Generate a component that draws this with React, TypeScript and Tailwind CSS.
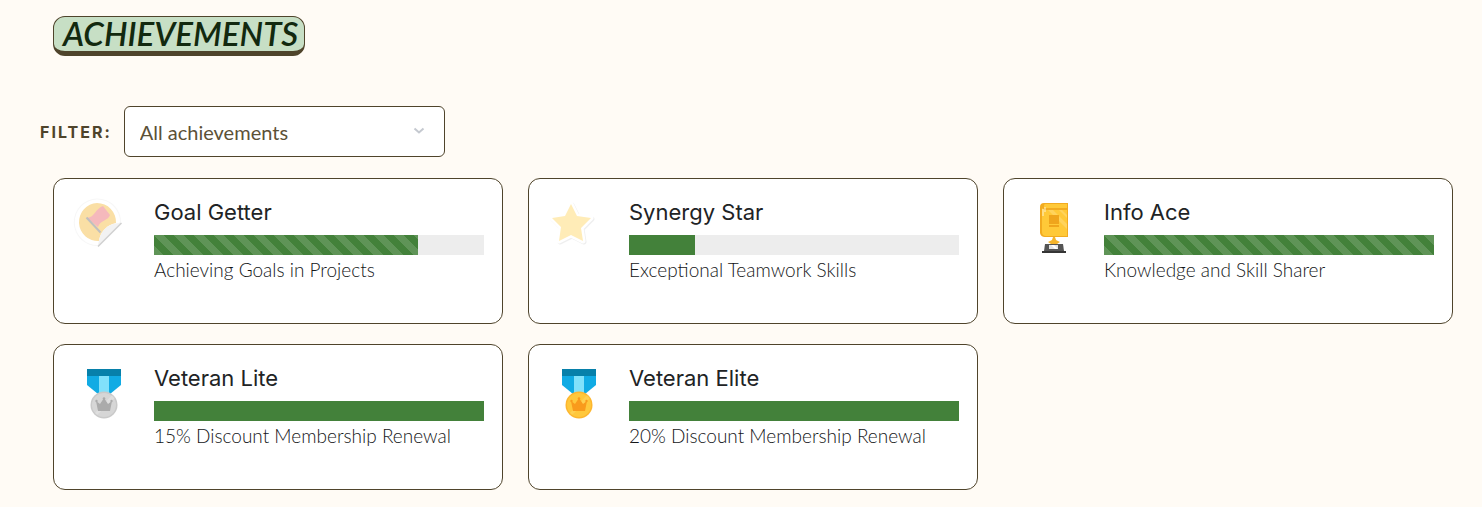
import type { ReactNode } from 'react';

type Achievement = {
  title: string;
  description: string;
  progress: number;
  striped: boolean;
  icon: ReactNode;
};

function GoalIcon() {
  return (
    <svg viewBox="0 0 60 60" className="size-[60px]" aria-hidden="true">
      <path d="M27 3.500a23.500 23.500 0 1 0 1 47.500L51 28A23.500 23.500 0 0 0 27 3.500Z" fill="#f7f7f7" />
      <path d="M27 4.500a22.500 22.500 0 1 0 1 45.500L50 27A22.500 22.500 0 0 0 27 4.500Z" fill="#fff" />
      <path d="M27 8a19 19 0 1 0 2 38c1-8 7-16 17-18A19 19 0 0 0 27 8Z" fill="#fadfa5" />
      <path d="M17 23c8-1 8-9 16-12l7 9c-2 6-10 5-12 12Z" fill="#f5b9bc" />
      <path d="m16.500 22.500 14 15" stroke="#bfbfbf" strokeWidth="2" />
      <path d="M28 51c1-7 2-11 5-15 4-5 9-8 18-8Z" fill="#f2f2f2" />
      <path d="m28 51.500 23.500-23.500" stroke="#cfcfcf" strokeWidth="1.500" />
    </svg>
  );
}

function StarIcon() {
  return (
    <svg viewBox="0 0 60 60" className="size-[60px]" aria-hidden="true">
      <path d="m27 10 6 12 14 2-10 10 2 13-12-6-12 6 2-14L8 24l13-2Z" fill="#d8d8d8" stroke="#d8d8d8" strokeWidth="5" strokeLinejoin="round" opacity=".4" />
      <path d="m26 9 6 12 14 2-10 10 2 13-12-6-12 6 2-14L7 23l13-2Z" fill="#fff" stroke="#fff" strokeWidth="5" strokeLinejoin="round" />
      <path d="m26 9 6 12 14 2-10 10 2 13-12-6-12 6 2-14L7 23l13-2Z" fill="#ffecb7" />
    </svg>
  );
}

function TrophyIcon() {
  return (
    <svg viewBox="-4 0 60 60" className="size-[60px]" aria-hidden="true">
      <path d="M20 8h24v34H21a5 5 0 0 1-5-4V12a4 4 0 0 1 4-4Z" fill="#f2ab20" />
      <path d="M21 9h22v4H20c0-2 0-4 1-4Z" fill="#ffc938" />
      <path d="M20 15h23v26H22a4 4 0 0 1-4-4V13Z" fill="#ffc938" />
      <path d="m29 15 14 14v5L24 15ZM35 15l8 8v-3l-5-5Z" fill="#ffe08a" opacity=".45" />
      <path d="M25 20h10v9H25zM25 30h10v2H25z" fill="#efa51c" />
      <path d="M19 14v7M21 12v5" stroke="#fff3ce" strokeWidth="1" />
      <path d="M29 42h2l1 3 4 2-3 2H27l-3-2 4-2Z" fill="#f5b42a" />
      <path d="M21 49h18l1 7H20Z" fill="#555" />
      <path d="M18 56h24v2H18Z" fill="#353535" />
      <path d="M25 50h9v4h-9Z" fill="#e3e3e3" />
      <path d="m27 50 4 4h3l-4-4Z" fill="#fff" />
    </svg>
  );
}

type MedalProps = { rim: string; face: string; crown: string; shine: string };

function MedalIcon({ rim, face, crown, shine }: MedalProps) {
  return (
    <svg viewBox="-4 1 60 60" className="size-[60px]" aria-hidden="true">
      <path d="M13 9h34v16l-11 9H24l-11-9Z" fill="#11abe4" />
      <path d="M25 15h10v18H25Z" fill="#81e1fb" />
      <path d="M13 9h34v7H13Z" fill="#0780aa" />
      <circle cx="30" cy="45" r="13.500" fill={rim} />
      <circle cx="30" cy="45" r="12" fill={face} />
      <path d="M21 53 38 35l3 3-18 17Z" fill={shine} opacity=".4" />
      <path d="m22 41 4 3 4-6 4 6 4-3-2 10H24Z" fill={crown} />
      <circle cx="22.500" cy="41" r="1.200" fill={crown} />
      <circle cx="30" cy="38.500" r="1.300" fill={crown} />
      <circle cx="37.500" cy="41" r="1.200" fill={crown} />
    </svg>
  );
}

const achievements: Achievement[] = [
  {
    title: 'Goal Getter',
    description: 'Achieving Goals in Projects',
    progress: 80,
    striped: true,
    icon: <GoalIcon />,
  },
  {
    title: 'Synergy Star',
    description: 'Exceptional Teamwork Skills',
    progress: 20,
    striped: false,
    icon: <StarIcon />,
  },
  {
    title: 'Info Ace',
    description: 'Knowledge and Skill Sharer',
    progress: 100,
    striped: true,
    icon: <TrophyIcon />,
  },
  {
    title: 'Veteran Lite',
    description: '15% Discount Membership Renewal',
    progress: 100,
    striped: false,
    icon: <MedalIcon rim="#c9c9c9" face="#d6d6d6" crown="#ababab" shine="#ededed" />,
  },
  {
    title: 'Veteran Elite',
    description: '20% Discount Membership Renewal',
    progress: 100,
    striped: false,
    icon: <MedalIcon rim="#fdb62f" face="#ffc83c" crown="#f99b1c" shine="#ffdc70" />,
  },
];

const stripes =
  'bg-[linear-gradient(45deg,rgba(255,255,255,0.15)_25%,transparent_25%,transparent_50%,rgba(255,255,255,0.15)_50%,rgba(255,255,255,0.15)_75%,transparent_75%,transparent)] bg-[length:20px_20px]';

function AchievementCard({ title, description, progress, striped, icon }: Achievement) {
  return (
    <li className="flex min-h-[146px] rounded-xl border border-[#4f442b] bg-white pt-4 pr-[18px] pl-4">
      <div className="w-[84px] shrink-0">{icon}</div>
      <div className="min-w-0 flex-1">
        <h2 className="font-['Inter',sans-serif] text-[22px] leading-[34px] text-[#212325]">{title}</h2>
        <div
          role="progressbar"
          aria-label={title}
          aria-valuenow={progress}
          aria-valuemin={0}
          aria-valuemax={100}
          className="mt-[6px] h-5 bg-[#ededed]"
        >
          <div
            className={`h-full bg-[#43813a] ${striped ? stripes : ''}`}
            style={{ width: `${progress}%` }}
          />
        </div>
        <p className="mt-[3px] text-[19px] leading-6 font-light text-[#141618]">{description}</p>
      </div>
    </li>
  );
}

export default function App() {
  return (
    <main className="min-h-screen bg-[#fffbf5] pt-4 pr-[29px] pb-4 pl-10 font-['Lato',sans-serif]">
      <h1 className="ml-[13px] w-fit rounded-xl border border-b-[5px] border-[#4f442b] bg-[#c7dfc5] pr-[6px] pb-[2px] pl-[9px] text-[33px] leading-[32px] font-semibold text-[#12290f] italic">
        ACHIEVEMENTS
      </h1>

      <div className="mt-[50px] flex items-center gap-3">
        <label
          htmlFor="filter"
          className="font-['Inter',sans-serif] text-base font-bold tracking-[2px] text-[#4f442b]"
        >
          FILTER:
        </label>
        <div className="relative w-[321px]">
          <select
            id="filter"
            className="h-[51px] w-full appearance-none rounded-md border border-[#4f442b] bg-white pr-10 pl-[15px] text-xl text-[#5c5137]"
          >
            <option>All achievements</option>
          </select>
          <svg
            viewBox="0 0 12 8"
            className="pointer-events-none absolute top-[21px] right-5 h-2 w-3"
            fill="none"
            stroke="#c5c9d0"
            strokeWidth="2"
            aria-hidden="true"
          >
            <path d="m1.500 1.500 4.500 4 4.500-4" />
          </svg>
        </div>
      </div>

      <ul className="mt-[21px] ml-[13px] grid grid-cols-3 gap-x-[25px] gap-y-5">
        {achievements.map((achievement) => (
          <AchievementCard key={achievement.title} {...achievement} />
        ))}
      </ul>
    </main>
  );
}
